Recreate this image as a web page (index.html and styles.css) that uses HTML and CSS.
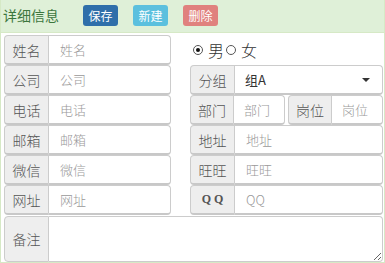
FILE: index.html
```html
<!DOCTYPE html>
<html>
	<head>
		<meta charset="UTF-8" />
		<title>详细信息</title>
		<link rel="stylesheet" href="styles.css">
	</head>
	<body>
		<div class="panel">
			<div class="panel-heading">
				<span class="title">详细信息</span>
				<button class="btn btn-save">保存</button>
				<button class="btn btn-new">新建</button>
				<button class="btn btn-del">删除</button>
			</div>
			<div class="panel-body">
				<div class="form-grid">
					<div class="col">
						<div class="input-group"><span class="addon">姓名</span><input class="field" placeholder="姓名"></div>
						<div class="input-group"><span class="addon">公司</span><input class="field" placeholder="公司"></div>
						<div class="input-group"><span class="addon">电话</span><input class="field" placeholder="电话"></div>
						<div class="input-group"><span class="addon">邮箱</span><input class="field" placeholder="邮箱"></div>
						<div class="input-group"><span class="addon">微信</span><input class="field" placeholder="微信"></div>
						<div class="input-group"><span class="addon">网址</span><input class="field" placeholder="网址"></div>
					</div>
					<div class="col">
						<div class="radio-row">
							<label class="radio"><span class="dot checked"></span>男</label>
							<label class="radio"><span class="dot"></span>女</label>
						</div>
						<div class="input-group"><span class="addon">分组</span><div class="field select">组A<span class="caret"></span></div></div>
						<div class="split">
							<div class="input-group"><span class="addon">部门</span><input class="field" placeholder="部门"></div>
							<div class="input-group"><span class="addon">岗位</span><input class="field" placeholder="岗位"></div>
						</div>
						<div class="input-group"><span class="addon">地址</span><input class="field" placeholder="地址"></div>
						<div class="input-group"><span class="addon">旺旺</span><input class="field" placeholder="旺旺"></div>
						<div class="input-group"><span class="addon qq">Q Q</span><input class="field" placeholder="QQ"></div>
					</div>
				</div>
				<div class="input-group note"><span class="addon">备注</span><textarea class="field"></textarea></div>
			</div>
		</div>
	</body>
</html>
```

FILE: styles.css
```css
body {
	margin: 0;
	font-family: "Noto Sans CJK SC", "Liberation Sans", sans-serif;
	font-size: 14px;
	color: #333;
}
.panel {
	width: 385px;
	height: 263px;
	box-sizing: border-box;
	border: 1px solid #d6e9c6;
	border-top: none;
	overflow: hidden;
}
.panel-heading {
	height: 33px;
	background: #dff0d8;
	border-bottom: 1px solid #d6e9c6;
	display: flex;
	align-items: center;
	padding-left: 2px;
	box-sizing: border-box;
}
.title {
	color: #3c763d;
	font-size: 14px;
	margin-right: 24px;
	margin-top: -3px;
}
.btn {
	font-family: inherit;
	font-size: 12px;
	color: #fff;
	border: none;
	border-radius: 3px;
	width: 35px;
	height: 21px;
	padding: 0;
	margin-right: 15px;
	margin-top: -1px;
	line-height: 21px;
}
.btn-save { background: #2f6faa; }
.btn-new { background: #5bc0de; }
.btn-del { background: #e0817e; }
.panel-body {
	padding: 2px 1px 0 3px;
}
.form-grid {
	display: grid;
	grid-template-columns: 167px 193px;
	column-gap: 19px;
}
.input-group {
	display: flex;
	height: 30px;
	min-width: 0;
}
.addon {
	width: 45px;
	flex: none;
	box-sizing: border-box;
	background: #eee;
	border: 1px solid #ccc;
	border-bottom: 2px solid #c8c8c8;
	border-radius: 4px 0 0 4px;
	color: #555;
	font-weight: 300;
	display: flex;
	align-items: center;
	justify-content: center;
}
.addon.qq {
	font-family: "Liberation Serif", serif;
	font-weight: bold;
	font-size: 12px;
}
.field {
	flex: 1;
	width: 0;
	min-width: 0;
	box-sizing: border-box;
	border: 1px solid #ccc;
	border-bottom: 2px solid #c8c8c8;
	border-left: none;
	border-radius: 0 4px 4px 0;
	padding: 0 11px;
	font-family: inherit;
	font-size: 13px;
	font-weight: 300;
	color: #333;
	background: #fff;
	outline: none;
}
.field::placeholder {
	color: #999;
}
.select {
	display: flex;
	align-items: center;
	justify-content: space-between;
	padding: 0 12px 0 10px;
	font-weight: 400;
}
.caret {
	width: 0;
	height: 0;
	border-left: 4px solid transparent;
	border-right: 4px solid transparent;
	border-top: 4px solid #333;
}
.radio-row {
	height: 30px;
	display: flex;
	align-items: center;
	font-size: 16px;
	font-weight: 300;
	padding-left: 3px;
}
.radio {
	display: flex;
	align-items: center;
	margin-right: 2px;
}
.dot {
	width: 10px;
	height: 10px;
	border: 1px solid #555;
	border-radius: 50%;
	box-sizing: border-box;
	margin-right: 5px;
	position: relative;
}
.dot.checked::after {
	content: "";
	position: absolute;
	left: 2px;
	top: 2px;
	width: 4px;
	height: 4px;
	border-radius: 50%;
	background: #111;
}
.split {
	display: flex;
	gap: 3px;
}
.split .input-group {
	flex: 1;
}
.split .addon {
	width: 44px;
}
.split .field {
	padding: 0 10px;
}
.note {
	height: 46px;
	margin-top: 1px;
}
.note .field {
	resize: both;
	padding: 6px 10px;
	border-bottom: 1px solid #ccc;
}
.note .addon {
	border-bottom: 1px solid #ccc;
}
```
